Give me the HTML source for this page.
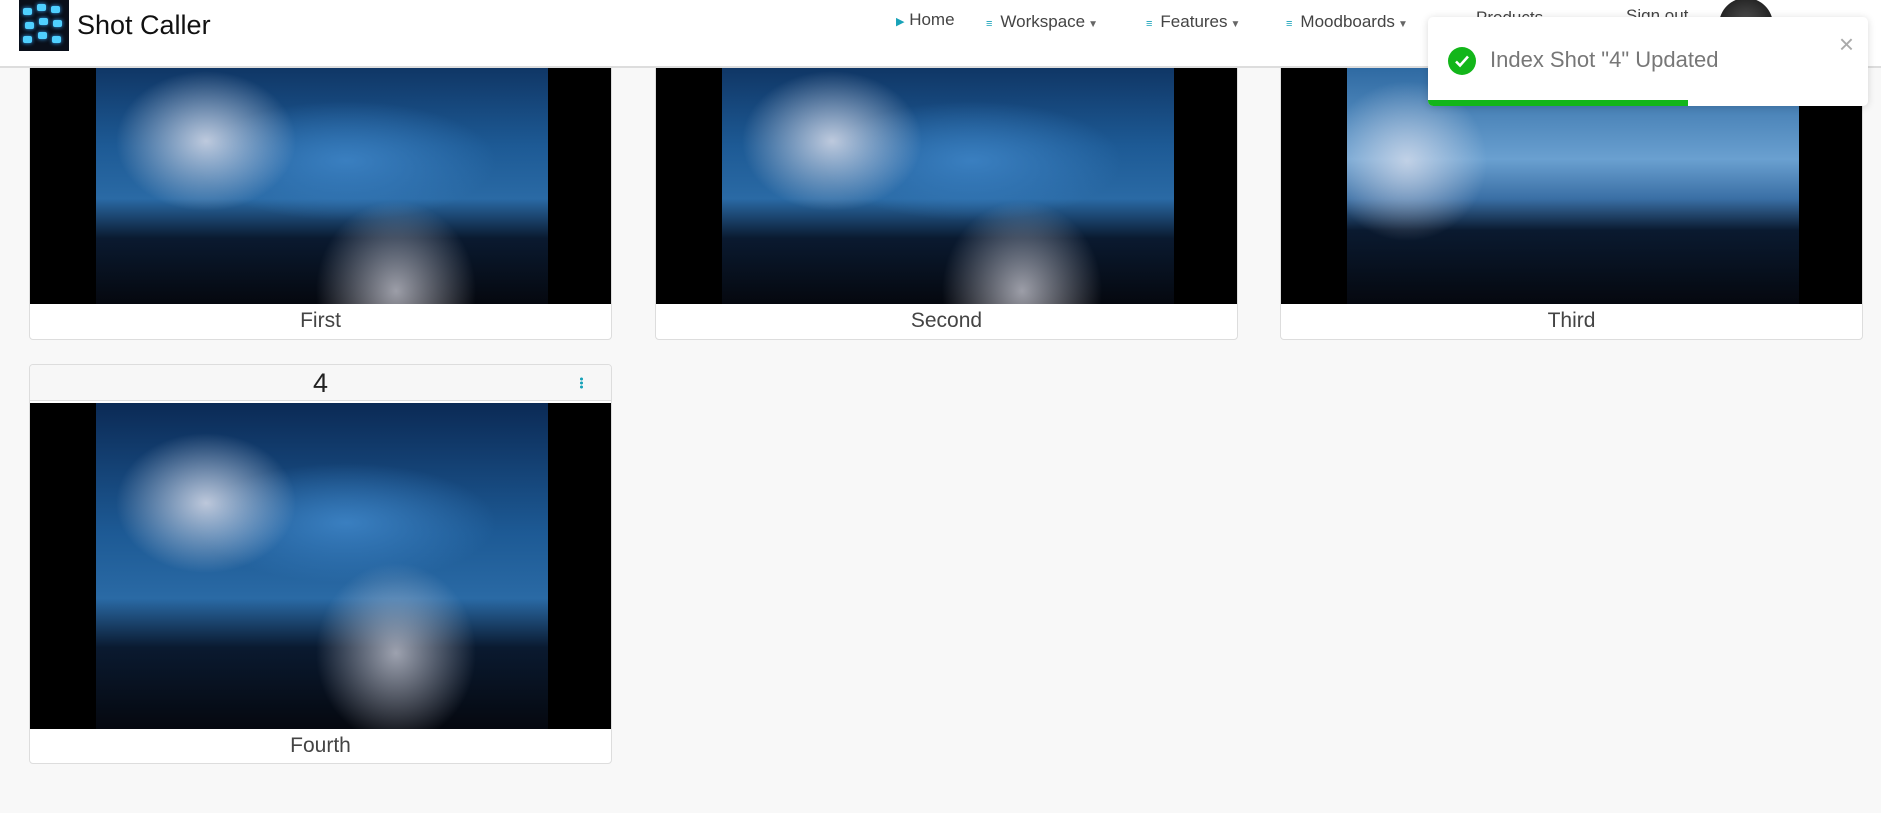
<!DOCTYPE html>
<html><head><meta charset="utf-8"><style>
*{box-sizing:border-box;margin:0;padding:0}
body{width:1881px;height:813px;background:#f8f8f8;font-family:"Liberation Sans",sans-serif;position:relative;overflow:hidden}
.hdr{position:absolute;left:0;top:0;width:1881px;height:68px;background:#fff;border-bottom:2px solid #ddd;z-index:5}
.logo{position:absolute;left:19px;top:0;width:50px;height:51px;background:#0a0f1a;overflow:hidden}
.logo i{position:absolute;width:9px;height:7px;background:#4fd0ff;border-radius:2px;box-shadow:0 0 4px #3af}
.brand{position:absolute;left:77px;top:10px;font-size:27px;color:#111}
.nav{position:absolute;top:10px;font-size:17px;color:#444}
.nav b{color:#17a2b8;font-size:11px;margin-right:8px;font-weight:bold}
.nav s{text-decoration:none;font-size:10px;color:#666;margin-left:3px}
.card{position:absolute;width:583px;background:#fff;border:1px solid #ddd;border-radius:4px;overflow:hidden}
.img{position:absolute;left:0;width:583px;background:#000;overflow:hidden}
.pic{position:absolute;left:66px;top:0;bottom:0;width:452px;
background:radial-gradient(ellipse 90px 70px at 110px 100px,rgba(230,230,240,.8),transparent),
radial-gradient(ellipse 80px 90px at 300px 250px,rgba(220,220,230,.7),transparent),
radial-gradient(ellipse 150px 60px at 250px 120px,#3a7fc0,transparent),
linear-gradient(180deg,#0b2a55 0%,#1d5a95 40%,#2a6aa5 60%,#0a1a30 75%,#05080f 100%)}
.cap{position:absolute;left:0;width:100%;text-align:center;font-size:21px;color:#444}
.toast{position:absolute;left:1428px;top:17px;width:440px;height:89px;background:#fff;border-radius:5px;box-shadow:0 1px 8px rgba(0,0,0,.15);z-index:10;overflow:hidden}
</style></head><body>
<div class="hdr">
 <div class="logo"><i style="left:4px;top:8px"></i><i style="left:18px;top:4px"></i><i style="left:32px;top:6px"></i><i style="left:6px;top:22px"></i><i style="left:20px;top:18px"></i><i style="left:34px;top:20px"></i><i style="left:4px;top:36px"></i><i style="left:19px;top:32px"></i><i style="left:33px;top:36px"></i></div>
 <div class="brand">Shot Caller</div>
 <div class="nav" style="left:896px"><span style="color:#17a2b8;font-size:11px">▶</span> Home</div>
 <div class="nav" style="left:986px;top:12px"><b>≡</b>Workspace<s>▼</s></div>
 <div class="nav" style="left:1146px;top:12px"><b>≡</b>Features<s>▼</s></div>
 <div class="nav" style="left:1286px;top:12px"><b>≡</b>Moodboards<s>▼</s></div>
 <div class="nav" style="left:1476px;top:8px">Products</div>
 <div class="nav" style="left:1626px;top:6px">Sign out</div>
 <div style="position:absolute;left:1719px;top:-2px;width:54px;height:54px;border-radius:50%;background:radial-gradient(circle,#555,#111)"></div>
</div>

<div class="card" style="left:29px;top:40px;height:300px"><div class="img" style="top:0;height:263px"><div class="pic"></div></div><div class="cap" style="top:268px">First</div></div>
<div class="card" style="left:655px;top:40px;height:300px"><div class="img" style="top:0;height:263px"><div class="pic"></div></div><div class="cap" style="top:268px">Second</div></div>
<div class="card" style="left:1280px;top:40px;height:300px"><div class="img" style="top:0;height:263px"><div class="pic" style="background:radial-gradient(ellipse 80px 80px at 60px 120px,rgba(230,230,240,.7),transparent),linear-gradient(180deg,#1d5a95 0%,#6aa0d0 45%,#3a6fa5 60%,#0a1a30 72%,#05080f 100%)"></div></div><div class="cap" style="top:268px">Third</div></div>

<div class="card" style="left:29px;top:364px;height:400px">
 <div style="position:absolute;left:0;top:0;width:100%;height:36px;background:#f7f7f7;border-bottom:1px solid #ddd;text-align:center;font-size:27px;color:#222;line-height:36px">4</div>
 <div style="position:absolute;right:28px;top:12px;width:3px;height:12px;background:radial-gradient(circle,#17a2b8 1.4px,transparent 1.6px) 0 0/3px 4px"></div>
 <div class="img" style="top:38px;height:326px"><div class="pic"></div></div>
 <div class="cap" style="top:369px">Fourth</div>
</div>

<div class="toast">
 <div style="position:absolute;left:20px;top:30px;width:28px;height:28px;border-radius:50%;background:#13b61a"><svg width="28" height="28"><path d="M8 14.5l4 4 8-9" stroke="#fff" stroke-width="2.6" fill="none"/></svg></div>
 <div style="position:absolute;left:62px;top:30px;font-size:22px;color:#777">Index Shot "4" Updated</div>
 <div style="position:absolute;right:14px;top:12px;font-size:26px;color:#aaa">×</div>
 <div style="position:absolute;left:0;bottom:0;width:260px;height:6px;background:#13b61a"></div>
</div>
</body></html>
